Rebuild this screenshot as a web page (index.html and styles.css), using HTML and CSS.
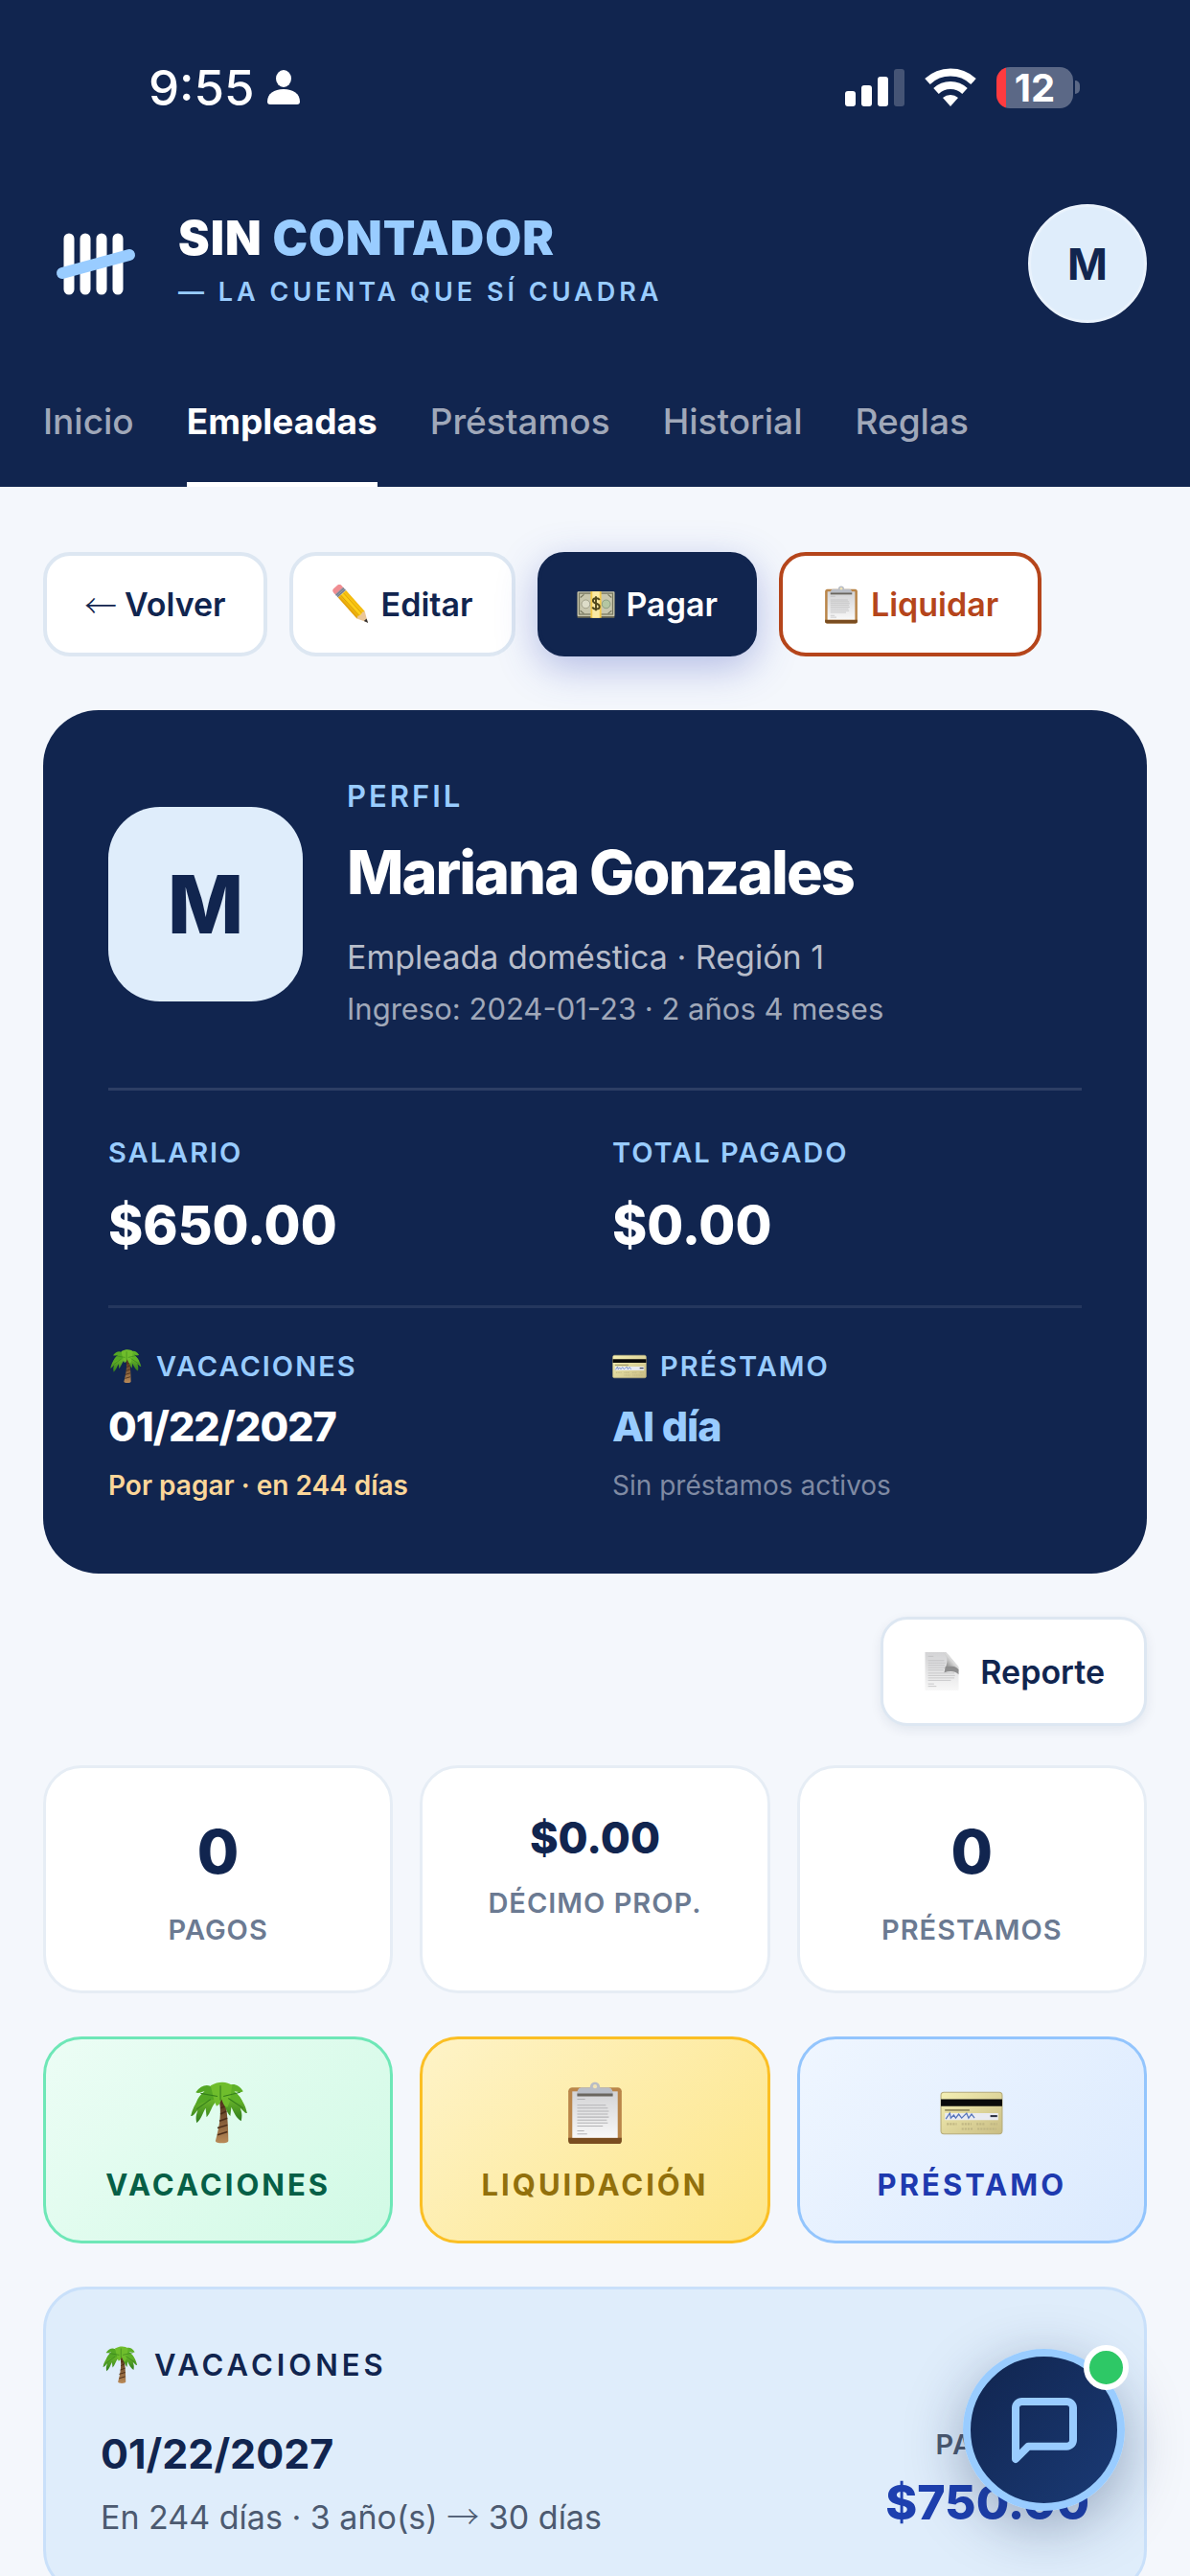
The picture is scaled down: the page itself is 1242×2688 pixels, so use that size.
FILE: index.html
```html
<!DOCTYPE html>
<html lang="es">
<head>
    <meta charset="UTF-8">
    <meta name="viewport" content="width=device-width, initial-scale=1.0">
    <title>Sin Contador - Empleadas</title>
    <link rel="stylesheet" href="styles.css">
</head>
<body>
    <!-- Iconos compartidos -->
    <svg class="sprite" aria-hidden="true">
        <defs>
            <linearGradient id="g-leaf" x1="0" y1="0" x2="0" y2="1">
                <stop offset="0" stop-color="#7cc62f"/>
                <stop offset="1" stop-color="#2f7d1c"/>
            </linearGradient>
            <linearGradient id="g-trunk" x1="0" y1="0" x2="0" y2="1">
                <stop offset="0" stop-color="#4a2c17"/>
                <stop offset="1" stop-color="#b98a58"/>
            </linearGradient>
            <linearGradient id="g-paper" x1="0" y1="0" x2="0" y2="1">
                <stop offset="0" stop-color="#d3d3d5"/>
                <stop offset="1" stop-color="#f8f8f8"/>
            </linearGradient>
            <linearGradient id="g-card" x1="0" y1="0" x2="1" y2="1">
                <stop offset="0" stop-color="#f5f0b4"/>
                <stop offset="1" stop-color="#c9bd84"/>
            </linearGradient>
            <linearGradient id="g-pencil" x1="0" y1="0" x2="1" y2="0">
                <stop offset="0" stop-color="#e09a08"/>
                <stop offset="0.5" stop-color="#fdd017"/>
                <stop offset="1" stop-color="#f2b70c"/>
            </linearGradient>
            <linearGradient id="g-fold" x1="1" y1="0" x2="0" y2="1">
                <stop offset="0" stop-color="#ffffff"/>
                <stop offset="0.45" stop-color="#d8d8d8"/>
                <stop offset="1" stop-color="#555555"/>
            </linearGradient>
        </defs>
        <symbol id="palm" viewBox="0 0 64 64">
            <path d="M32 17c4 12 1 29-3 43 0 3 13 3 13 0 0-14-1-31-4-43z" fill="url(#g-trunk)"/>
            <path d="M31 54l10-3M31 47l10-3M33 40l8-3M34 33l6-3M34 27l5-2" stroke="#4b2d18" stroke-width="1.5"/>
            <path d="M33 13C20 8 8 17 4 35c3 0 5-4 7-6-2 6-2 8-1 13 5-4 6-10 9-15l1 9c4-4 5-11 9-15z" fill="url(#g-leaf)"/>
            <path d="M35 12c12-6 22 3 26 20-3 0-5-4-7-5 2 5 2 8 1 13-5-3-7-8-10-14l-1 9c-4-4-5-10-8-15z" fill="url(#g-leaf)"/>
            <path d="M33 15C27 2 17 0 9 11c3 2 7-1 9-1-5 4-8 8-9 14 9-4 16-5 24-7z" fill="#54a724"/>
            <path d="M34 15c5-14 16-16 23-5-3 2-6 0-9 0 5 4 8 8 9 13-9-3-15-4-23-6z" fill="#5eb127"/>
            <path d="M24 4c9-5 17-4 22 0-2 8-1 15-5 22-4-1-4-5-6-8-1 3-2 6-5 7-3-7-4-13-6-21z" fill="#6fbd2c"/>
            <path d="M34 4v15M14 12l17 3M54 11l-17 4M10 28l14-10M57 27L42 17" stroke="#347e1b" stroke-width="1" fill="none"/>
        </symbol>
        <symbol id="clipboard" viewBox="0 0 64 64">
            <rect x="5" y="6" width="54" height="57" rx="4" fill="#b98549"/>
            <path d="M5 57h54v3a3 3 0 0 1-3 3H8a3 3 0 0 1-3-3z" fill="#7a4d20"/>
            <rect x="9" y="10" width="46" height="47" fill="url(#g-paper)"/>
            <path d="M14 18h8M14 24h29M14 27h31M14 30h32M14 33h31M14 36h32M14 39h30M14 42h31M14 45h26M14 50h7M14 53h10" stroke="#b4b4b6" stroke-width="1"/>
            <path d="M27 6c0-7 10-7 10 0h8c3 0 5 2 5 6v2H14v-2c0-4 2-6 5-6z" fill="#b9bdc5"/>
            <path d="M14 12h36v3H14z" fill="#6a665f"/>
            <circle cx="32" cy="5" r="2" fill="#f2e3b4"/>
        </symbol>
        <symbol id="card" viewBox="0 0 64 64">
            <rect x="1" y="11" width="62" height="42" rx="3" fill="url(#g-card)" stroke="#b5ab79"/>
            <path d="M1 18h62v7H1z" fill="#0a0a0a"/>
            <path d="M5 29h25" stroke="#8a8257" stroke-width="1.5"/>
            <path d="M5 32h54v7H5z" fill="#e9ebf2"/>
            <path d="M6 38l4-6 1 5 3-3 2 3 3-4 3 4 5-5 2 5 3-4 3 4" stroke="#5574bb" stroke-width="1.2" fill="none"/>
            <path d="M51 35h7" stroke="#2c3140" stroke-width="2"/>
            <path d="M7 43h10M22 43h10M37 43h9M51 43h7M22 48h12M38 48h19" stroke="#c0b683" stroke-width="2" stroke-dasharray="2 1"/>
        </symbol>
        <symbol id="pencil" viewBox="0 0 64 64">
            <g transform="rotate(-42 32 32)">
                <rect x="23" y="-8" width="18" height="12" rx="5" fill="#f08d92"/>
                <rect x="23" y="1" width="18" height="7" fill="#8f97a5"/>
                <path d="M23 3h18M23 6h18" stroke="#626a78" stroke-width="1"/>
                <rect x="23" y="8" width="18" height="47" fill="url(#g-pencil)"/>
                <path d="M29 8v47M35 8v47" stroke="#cf9106" stroke-width="1"/>
                <path d="M23 55l4-2 5 2 5-2 4 2-9 17z" fill="#eac698"/>
                <path d="M29 66h6l-3 7z" fill="#33302f"/>
            </g>
        </symbol>
        <symbol id="cash" viewBox="0 0 64 64">
            <rect x="1" y="11" width="62" height="43" rx="1" fill="#6f6c56"/>
            <rect x="1" y="10" width="62" height="41" rx="1" fill="#c9c7ae"/>
            <rect x="4" y="13" width="56" height="35" fill="none" stroke="#77775f" stroke-width="2"/>
            <circle cx="15" cy="31" r="7" fill="#dddcc8" stroke="#83846c"/>
            <circle cx="49" cy="31" r="7" fill="#b4c6a2" stroke="#71876a"/>
            <path d="M6 20l6-5M58 20l-6-5M6 42l6 5M58 42l-6 5" stroke="#77775f" stroke-width="2"/>
            <path d="M23 10h18v44H23z" fill="#f3c94a"/>
            <path d="M26 10h12v44H26z" fill="#fae9a4"/>
            <path d="M38 24c-2-4-11-4-11 1 0 6 11 4 11 10 0 6-10 5-12 1M32 18v24" stroke="#4f471c" stroke-width="3" fill="none"/>
        </symbol>
        <symbol id="page" viewBox="0 0 64 64">
            <path d="M4 0h35l21 24v40H4z" fill="url(#g-paper)"/>
            <path d="M9 7h9M9 14h27M9 18h29M9 22h28M9 26h29M9 30h26M9 35h44M9 39h45M9 43h44M9 47h38M9 53h10M9 57h14" stroke="#bcbcbe" stroke-width="1.2"/>
            <path d="M33 0c9 7 9 13 6 24 9-2 16-1 21 7V26L43 4z" fill="url(#g-fold)"/>
            <path d="M38 24c9-2 17-1 22 5v8c-6-6-15-6-24-3z" fill="#555" opacity=".6"/>
        </symbol>
    </svg>

    <div class="app">
        <header class="header">
            <div class="statusbar">
                <div class="statusbar-left">
                    <span class="clock">9:55</span>
                    <svg width="36" height="38" viewBox="0 0 36 38" fill="#fff" aria-hidden="true">
                        <ellipse cx="18" cy="10" rx="8" ry="9"/>
                        <path d="M1 34C1 26 8 21 18 21s17 5 17 13c0 2-1 3-3 3H4c-2 0-3-1-3-3z"/>
                    </svg>
                </div>
                <div class="statusbar-right">
                    <svg width="62" height="40" viewBox="0 0 62 40" fill="#fff" aria-hidden="true">
                        <rect x="0" y="24" width="11" height="16" rx="3"/>
                        <rect x="17" y="18" width="11" height="22" rx="3"/>
                        <rect x="34" y="9" width="11" height="31" rx="3"/>
                        <rect x="51" y="1" width="11" height="39" rx="3" opacity=".22"/>
                    </svg>
                    <svg width="54" height="40" viewBox="0 0 54 40" aria-hidden="true">
                        <g fill="none" stroke="#fff">
                            <path d="M3 14a35 35 0 0 1 48 0" stroke-width="8"/>
                            <path d="M12 24a22 22 0 0 1 30 0" stroke-width="8"/>
                        </g>
                        <path d="M19 31a12 12 0 0 1 16 0l-8 9z" fill="#fff"/>
                    </svg>
                    <div class="battery"><span>12</span></div>
                </div>
            </div>

            <div class="brand-row">
                <a class="brand" href="#">
                    <svg class="brand-logo" viewBox="0 0 111 111" aria-hidden="true">
                        <g stroke="#fff" stroke-width="11" stroke-linecap="round">
                            <path d="M27 29v53M44 29v53M61 29v53M78 29v53"/>
                        </g>
                        <path d="M20 65l70-19" stroke="#99ccff" stroke-width="12" stroke-linecap="round"/>
                    </svg>
                    <span class="brand-text">
                        <span class="brand-name">SIN <span class="accent">CONTADOR</span></span>
                        <span class="brand-tagline">— LA CUENTA QUE SÍ CUADRA</span>
                    </span>
                </a>
                <button class="user-avatar" type="button">M</button>
            </div>

            <nav class="tabs">
                <a class="tab" href="#">Inicio</a>
                <a class="tab active" href="#">Empleadas</a>
                <a class="tab" href="#">Préstamos</a>
                <a class="tab" href="#">Historial</a>
                <a class="tab" href="#">Reglas</a>
            </nav>
        </header>

        <main class="content">
            <div class="actions">
                <button class="btn btn-back" type="button"><span class="arrow">←</span> Volver</button>
                <button class="btn" type="button"><svg class="emoji"><use href="#pencil"/></svg>Editar</button>
                <button class="btn btn-primary" type="button"><svg class="emoji"><use href="#cash"/></svg>Pagar</button>
                <button class="btn btn-danger" type="button"><svg class="emoji"><use href="#clipboard"/></svg>Liquidar</button>
            </div>

            <section class="profile">
                <div class="profile-head">
                    <div class="profile-avatar">M</div>
                    <div class="profile-info">
                        <div class="profile-kicker">PERFIL</div>
                        <h1 class="profile-name">Mariana Gonzales</h1>
                        <div class="profile-role">Empleada doméstica · Región 1</div>
                        <div class="profile-since">Ingreso: 2024-01-23 · 2 años 4 meses</div>
                    </div>
                </div>
                <div class="profile-row amounts">
                    <div>
                        <div class="label">SALARIO</div>
                        <div class="amount">$650.00</div>
                    </div>
                    <div>
                        <div class="label">TOTAL PAGADO</div>
                        <div class="amount">$0.00</div>
                    </div>
                </div>
                <div class="profile-row states">
                    <div>
                        <div class="label"><svg class="emoji-sm"><use href="#palm"/></svg>VACACIONES</div>
                        <div class="state">01/22/2027</div>
                        <div class="note note-warn">Por pagar · en 244 días</div>
                    </div>
                    <div>
                        <div class="label"><svg class="emoji-sm"><use href="#card"/></svg>PRÉSTAMO</div>
                        <div class="state accent">Al día</div>
                        <div class="note">Sin préstamos activos</div>
                    </div>
                </div>
            </section>

            <div class="report-row">
                <button class="btn btn-report" type="button"><svg class="emoji"><use href="#page"/></svg>Reporte</button>
            </div>

            <div class="grid">
                <div class="stat">
                    <div class="stat-value">0</div>
                    <div class="stat-label">PAGOS</div>
                </div>
                <div class="stat">
                    <div class="stat-value money">$0.00</div>
                    <div class="stat-label">DÉCIMO PROP.</div>
                </div>
                <div class="stat">
                    <div class="stat-value">0</div>
                    <div class="stat-label">PRÉSTAMOS</div>
                </div>
            </div>

            <div class="grid">
                <button class="tile tile-green" type="button"><svg class="emoji-lg"><use href="#palm"/></svg>VACACIONES</button>
                <button class="tile tile-yellow" type="button"><svg class="emoji-lg"><use href="#clipboard"/></svg>LIQUIDACIÓN</button>
                <button class="tile tile-blue" type="button"><svg class="emoji-lg"><use href="#card"/></svg>PRÉSTAMO</button>
            </div>

            <section class="vacation">
                <h2 class="vacation-title"><svg class="emoji"><use href="#palm"/></svg>VACACIONES</h2>
                <div class="vacation-body">
                    <div>
                        <div class="vacation-date">01/22/2027</div>
                        <div class="vacation-detail">En 244 días · 3 año(s) <span class="arrow">→</span> 30 días</div>
                    </div>
                    <div class="vacation-pay">
                        <div class="vacation-pay-label">PAGO EST.</div>
                        <div class="vacation-pay-amount">$750.00</div>
                    </div>
                </div>
            </section>
        </main>

        <button class="chat" type="button" aria-label="Chat">
            <svg width="80" height="80" viewBox="0 0 24 24" fill="none" stroke="#99ccff" stroke-width="2.4" stroke-linecap="round" stroke-linejoin="round">
                <path d="M21 15a2 2 0 0 1-2 2H7l-4 4V5a2 2 0 0 1 2-2h14a2 2 0 0 1 2 2z"/>
            </svg>
            <span class="chat-dot"></span>
        </button>
    </div>
</body>
</html>
```
FILE: styles.css
```css
:root {
    --navy: #11254f;
    --sky: #99ccff;
    --ice: #dfedfb;
    --bg: #f4f7fc;
}

* {
    box-sizing: border-box;
}

body {
    margin: 0;
    font-family: Inter, "Liberation Sans", sans-serif;
    background: var(--bg);
    color: var(--navy);
}

button {
    font-family: inherit;
    cursor: pointer;
}

a {
    color: inherit;
    text-decoration: none;
}

h1, h2 {
    margin: 0;
}

.sprite {
    position: absolute;
    width: 0;
    height: 0;
}

.app {
    height: 100vh;
    display: flex;
    flex-direction: column;
    overflow: hidden;
}

.accent {
    color: var(--sky);
}

.arrow {
    font-family: "Noto Sans CJK JP", sans-serif;
    font-weight: 300;
    line-height: 1;
}

.emoji {
    width: 40px;
    height: 42px;
}

.emoji-sm {
    width: 36px;
    height: 36px;
}

.emoji-lg {
    width: 66px;
    height: 68px;
}

/* Cabecera */
.header {
    flex: none;
    background: var(--navy);
    color: white;
}

.statusbar {
    height: 182px;
    padding: 0 122px 0 155px;
    display: flex;
    align-items: center;
    justify-content: space-between;
}

.statusbar-left {
    display: flex;
    align-items: center;
    gap: 12px;
}

.statusbar-right {
    display: flex;
    align-items: center;
    gap: 21px;
}

.clock {
    font-size: 51px;
    font-weight: 500;
}

.battery {
    position: relative;
    width: 80px;
    height: 43px;
    border-radius: 14px;
    background: linear-gradient(90deg, #ff3b3f 10px, #5b6886 10px);
    font-size: 40px;
    font-weight: 700;
    line-height: 43px;
    text-align: center;
}

.battery::after {
    content: "";
    position: absolute;
    right: -7px;
    top: 14px;
    width: 5px;
    height: 14px;
    border-radius: 0 5px 5px 0;
    background: #5b6886;
}

.brand-row {
    padding: 31px 45px 46px;
    display: flex;
    align-items: center;
    justify-content: space-between;
}

.brand {
    display: flex;
    align-items: center;
    gap: 30px;
}

.brand-logo {
    width: 111px;
    height: 111px;
    fill: none;
}

.brand-text {
    display: flex;
    flex-direction: column;
    gap: 12px;
}

.brand-name {
    font-size: 49px;
    font-weight: 900;
    line-height: 48px;
    letter-spacing: 1px;
}

.brand-tagline {
    font-size: 27px;
    font-weight: 600;
    line-height: 40px;
    letter-spacing: 4px;
    color: var(--sky);
}

.user-avatar {
    width: 124px;
    height: 124px;
    padding: 0;
    border: 3px solid #e9f2fc;
    border-radius: 50%;
    background: var(--ice);
    color: var(--navy);
    font-size: 45px;
    font-weight: 700;
}

.tabs {
    display: flex;
    gap: 55px;
    padding: 0 45px;
}

.tab {
    padding: 34px 0 40px;
    border-bottom: 5px solid transparent;
    font-size: 37px;
    font-weight: 500;
    line-height: 46px;
    color: #a0a8b9;
}

.tab.active {
    color: white;
    font-weight: 700;
    border-bottom-color: white;
}

/* Contenido */
.content {
    flex: 1;
    min-height: 0;
    padding: 68px 45px;
    overflow-y: auto;
    scrollbar-width: none;
}

.actions {
    display: flex;
    gap: 23px;
    margin-bottom: 56px;
}

.btn {
    display: flex;
    align-items: center;
    gap: 11px;
    height: 109px;
    padding: 0 41px;
    border: 4px solid #dde7f2;
    border-radius: 28px;
    background: white;
    color: var(--navy);
    font-size: 34px;
    font-weight: 600;
}

.btn-back {
    gap: 8px;
    padding: 0 39px;
}

.btn-primary {
    padding: 0 37px;
    background: var(--navy);
    border-color: var(--navy);
    color: white;
    box-shadow: 0 12px 40px rgba(60, 80, 190, 0.35);
}

.btn-danger {
    border-color: #b5451b;
    color: #b5451b;
}

.btn-report {
    height: 114px;
    gap: 20px;
    border-width: 3px;
    box-shadow: 0 4px 12px rgba(17, 37, 79, 0.08);
}

/* Perfil */
.profile {
    padding: 72px 68px;
    border-radius: 58px;
    background: var(--navy);
    color: white;
}

.profile-head {
    display: flex;
    align-items: center;
    gap: 46px;
    padding-bottom: 61px;
}

.profile-avatar {
    width: 203px;
    height: 203px;
    border-radius: 54px;
    background: var(--ice);
    color: var(--navy);
    font-size: 84px;
    font-weight: 800;
    line-height: 203px;
    text-align: center;
}

.profile-kicker {
    font-size: 31px;
    font-weight: 600;
    line-height: 36px;
    letter-spacing: 3px;
    color: var(--sky);
}

.profile-name {
    margin: 23px 0 26px;
    font-size: 63px;
    font-weight: 800;
    line-height: 76px;
    letter-spacing: -2px;
}

.profile-role {
    margin-bottom: 8px;
    font-size: 34px;
    line-height: 50px;
    color: #b8bdca;
}

.profile-since {
    font-size: 31px;
    line-height: 42px;
    color: #a0a8b9;
}

.profile-row {
    display: grid;
    grid-template-columns: 1fr 1fr;
    gap: 36px;
}

.amounts {
    padding: 47px 0 54px;
    border-top: 3px solid #2d3e64;
}

.states {
    padding-top: 43px;
    border-top: 3px solid #25375e;
}

.label {
    display: flex;
    align-items: center;
    gap: 14px;
    font-size: 29px;
    font-weight: 600;
    line-height: 36px;
    letter-spacing: 2px;
    color: var(--sky);
}

.amount {
    margin-top: 27px;
    font-size: 55px;
    font-weight: 800;
    line-height: 60px;
}

.state {
    margin: 19px 0 17px;
    font-size: 43px;
    font-weight: 800;
    line-height: 50px;
    letter-spacing: -1px;
}

.note {
    font-size: 28px;
    line-height: 40px;
    color: #7f8aa3;
}

.note-warn {
    font-weight: 600;
    color: #fcd699;
}

.report-row {
    display: flex;
    justify-content: flex-end;
    margin: 45px 0 41px;
}

/* Tarjetas */
.grid {
    display: grid;
    grid-template-columns: repeat(3, 1fr);
    gap: 28px;
    margin-bottom: 45px;
}

.stat {
    padding: 49px 20px 45px;
    border: 3px solid #e6edf5;
    border-radius: 40px;
    background: white;
    text-align: center;
}

.stat-value {
    margin-bottom: 26px;
    font-size: 63px;
    font-weight: 800;
    line-height: 76px;
}

.stat-value.money {
    font-size: 45px;
    line-height: 48px;
}

.stat-label {
    font-size: 29px;
    font-weight: 600;
    line-height: 36px;
    letter-spacing: 1px;
    color: #6b7a92;
}

.tile {
    display: flex;
    flex-direction: column;
    align-items: center;
    gap: 22px;
    padding: 43px 20px 39px;
    border: 3px solid;
    border-radius: 40px;
    font-size: 31px;
    font-weight: 700;
    line-height: 38px;
    letter-spacing: 3px;
}

.tile-green {
    border-color: #6ee7b7;
    background: linear-gradient(135deg, #ecfdf5, #d1fae5);
    color: #065f46;
}

.tile-yellow {
    border-color: #fbbf24;
    background: linear-gradient(135deg, #fef3c7, #fde68a);
    color: #92700c;
}

.tile-blue {
    border-color: #93c5fd;
    background: linear-gradient(135deg, #eff6ff, #dbeafe);
    color: #1e3aaf;
}

.vacation {
    padding: 57px 57px 53px;
    border: 3px solid #c9e0fa;
    border-radius: 45px;
    background: var(--ice);
}

.vacation-title {
    display: flex;
    align-items: center;
    gap: 16px;
    margin-bottom: 43px;
    font-size: 31px;
    font-weight: 600;
    line-height: 44px;
    letter-spacing: 4px;
}

.vacation-body {
    display: flex;
    justify-content: space-between;
}

.vacation-date {
    margin-bottom: 17px;
    font-size: 43px;
    font-weight: 700;
    line-height: 54px;
}

.vacation-detail {
    font-size: 34px;
    line-height: 46px;
    color: #4c5a70;
}

.vacation-pay {
    text-align: right;
}

.vacation-pay-label {
    margin-bottom: 12px;
    font-size: 29px;
    font-weight: 600;
    line-height: 36px;
    letter-spacing: 1px;
    color: #4c5a70;
}

.vacation-pay-amount {
    font-size: 50px;
    font-weight: 800;
    line-height: 60px;
    color: #1e40af;
}

/* Chat flotante */
.chat {
    position: fixed;
    right: 68px;
    bottom: 68px;
    width: 169px;
    height: 169px;
    padding: 0;
    display: flex;
    align-items: center;
    justify-content: center;
    border: 8px solid var(--sky);
    border-radius: 50%;
    background: linear-gradient(135deg, #11254f, #1a3a75);
    box-shadow: 0 16px 60px rgba(17, 37, 79, 0.35);
}

.chat-dot {
    position: absolute;
    top: -12px;
    right: -12px;
    width: 47px;
    height: 47px;
    border: 6px solid white;
    border-radius: 50%;
    background: #2ec866;
}
```
